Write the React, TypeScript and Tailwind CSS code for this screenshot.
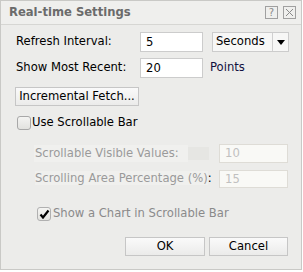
const font = "font-['DejaVu_Sans',Verdana,sans-serif]";

function CheckBox({ checked, disabled }: { checked?: boolean; disabled?: boolean }) {
  return (
    <span
      className={`flex h-[14px] w-[14px] items-center justify-center rounded-[3px] border ${
        disabled ? "border-[#b0b0b0]" : "border-[#a8a8a8]"
      } bg-gradient-to-b from-[#f4f4f2] to-[#e2e2df]`}
    >
      {checked && (
        <svg width="11" height="10" viewBox="0 0 11 10">
          <path d="M1.5 5.5 L4 8.5 L9.5 1.5" fill="none" stroke="#000" strokeWidth="2.2" />
        </svg>
      )}
    </span>
  );
}

export default function App() {
  return (
    <div className={`h-[272px] w-[303px] bg-white ${font}`}>
      <div className="flex h-[270px] w-[302px] flex-col border border-[#c9c9c6] bg-[#ececea] text-[11.6px] text-black">
        {/* Title bar */}
        <div className="flex h-[24px] items-center justify-between border-b border-[#d6d6d3] bg-[#efefed] pl-[8px] pr-[5px]">
          <span className="text-[11.6px] font-bold text-[#6b6b6b]">Real-time Settings</span>
          <div className="flex gap-[5px]">
            <span className="flex h-[13px] w-[13px] items-center justify-center border border-[#a0a0a0] text-[10px] leading-none text-[#8a8a8a]">
              ?
            </span>
            <span className="flex h-[13px] w-[13px] items-center justify-center border border-[#a0a0a0]">
              <svg width="9" height="9" viewBox="0 0 9 9">
                <path d="M1 1 L8 8 M8 1 L1 8" stroke="#8a8a8a" strokeWidth="1" />
              </svg>
            </span>
          </div>
        </div>

        <div className="flex flex-col pl-[14px]">
          {/* Refresh interval */}
          <div className="mt-[7px] flex h-[20px] items-center">
            <span className="w-[125px] pl-[1px]">Refresh Interval:</span>
            <div className="flex h-[20px] w-[63px] items-center border border-[#cccccc] bg-white px-[5px] pt-[1px]">5</div>
            <div className="ml-[9px] flex h-[20px] w-[77px] items-center border border-[#cccccc] bg-[#f7f7f6]">
              <span className="flex-1 pl-[3px]">Seconds</span>
              <span className="flex h-full w-[16px] items-center justify-center border-l border-[#d0d0d0]">
                <svg width="8" height="5" viewBox="0 0 8 5">
                  <path d="M0 0 H8 L4 5 Z" fill="#000" />
                </svg>
              </span>
            </div>
          </div>

          {/* Show most recent */}
          <div className="mt-[6px] flex h-[20px] items-center">
            <span className="w-[125px] pl-[1px]">Show Most Recent:</span>
            <div className="flex h-[20px] w-[63px] items-center border border-[#cccccc] bg-white px-[5px] pt-[1px]">20</div>
            <span className="ml-[7px] text-[#101040]">Points</span>
          </div>

          {/* Incremental fetch */}
          <div className="mt-[9px] flex">
            <button className="flex h-[19px] w-[124px] items-center justify-center border border-[#c6c6c6] bg-gradient-to-b from-[#fafafa] to-[#ebebea]">
              Incremental Fetch...
            </button>
          </div>

          {/* Use scrollable bar */}
          <div className="mt-[9px] flex h-[16px] items-center gap-[1px] pl-[2px]">
            <CheckBox />
            <span>Use Scrollable Bar</span>
          </div>

          {/* Scrollable visible values */}
          <div className="mt-[13px] flex h-[19px] items-center pl-[19px] text-[#9a9a9a]">
            <span className="w-[154px] bg-[#f0f0ee] pl-[1px]">Scrollable Visible Values:</span>
            <span className="h-[13px] w-[21px] bg-[#e6e6e3]" />
            <div className="ml-[10px] flex h-[19px] w-[69px] items-center border border-[#dedcd6] bg-[#f9f9f6] px-[5px] pt-[1px] text-[#c0c0c0]">
              10
            </div>
          </div>

          {/* Scrolling area percentage */}
          <div className="mt-[7px] flex h-[18px] items-center pl-[19px] text-[#9a9a9a]">
            <span className="w-[185px] pl-[1px]">
              <span className="bg-[#f0f0ee]">Scrolling Area Percentage (%)</span>
              <span className="text-[#000]">:</span>
            </span>
            <div className="flex h-[18px] w-[69px] items-center border border-[#dedcd6] bg-[#f9f9f6] px-[5px] pt-[1px] text-[#c0c0c0]">
              15
            </div>
          </div>

          {/* Show a chart */}
          <div className="mt-[19px] flex h-[14px] items-center gap-[2px] pl-[22px] text-[#8a8a8a]">
            <CheckBox checked disabled />
            <span>Show a Chart in Scrollable Bar</span>
          </div>

          {/* Buttons */}
          <div className="mt-[16px] flex justify-end gap-[4px] pr-[13px]">
            <button className="flex h-[19px] w-[80px] items-center justify-center border border-[#c6c6c6] bg-gradient-to-b from-[#fafafa] to-[#ebebea]">
              OK
            </button>
            <button className="flex h-[19px] w-[79px] items-center justify-center border border-[#c6c6c6] bg-gradient-to-b from-[#fafafa] to-[#ebebea]">
              Cancel
            </button>
          </div>
        </div>
      </div>
    </div>
  );
}
